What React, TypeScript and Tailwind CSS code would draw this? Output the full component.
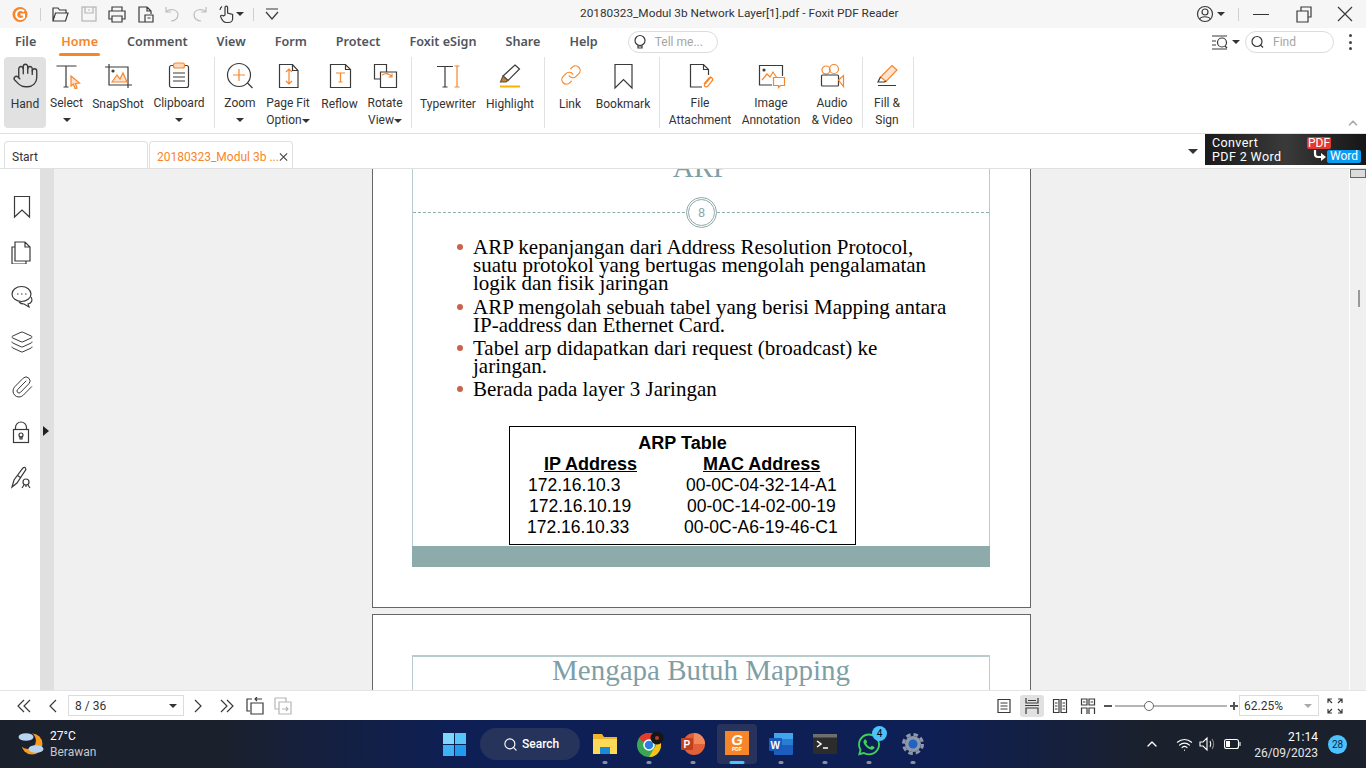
import type { ReactNode } from "react";
import { Hand, Link, Paperclip, Layers, Search, ChevronUp, Wifi } from "lucide-react";
import { FaWhatsapp } from "react-icons/fa";

const ORANGE = "#f7862a";
const DARK = "#3a3a3a";

const Ic = ({ s = 30, children }: { s?: number; children: ReactNode }) => (
  <svg width={s} height={s} viewBox={`0 0 ${s} ${s}`} fill="none" stroke={DARK} strokeWidth={1.2} className="shrink-0">
    {children}
  </svg>
);

const Caret = ({ className = "" }: { className?: string }) => (
  <span className={`inline-block h-0 w-0 border-x-[4px] border-t-[4px] border-x-transparent border-t-[#333] ${className}`} />
);

const Sep = () => <div className="h-[71px] w-px bg-[#e2e2e2]" />;

const RibbonItem = ({
  w,
  icon,
  label,
  second,
  active,
}: {
  w: string;
  icon: ReactNode;
  label: string;
  second?: ReactNode;
  active?: boolean;
}) => (
  <div className={`flex h-[71px] shrink-0 flex-col items-center rounded-[4px] pt-[3px] ${w} ${active ? "bg-[#e1e1e1]" : ""}`}>
    <div className="h-[31px]">{icon}</div>
    <div className="mt-[5px] whitespace-nowrap text-center text-[12px] leading-[17px] text-[#333]">{label}</div>
    {second && <div className="flex h-[17px] items-center whitespace-nowrap text-[12px] leading-[17px] text-[#333]">{second}</div>}
  </div>
);

const TitleBar = () => (
  <div className="flex h-[28px] items-center bg-[#f6f6f6]">
    <div className="flex w-[580px] shrink-0 items-center">
      <div className="ml-[12px] w-[28px]">
        <svg width="17" height="17" viewBox="0 0 17 17">
          <circle cx="8" cy="8.5" r="7.5" fill={ORANGE} />
          <path d="M12 5.5a4.5 4.5 0 1 0 0 6v-3H8.5" fill="none" stroke="#fff" strokeWidth="2" />
        </svg>
      </div>
      <div className="h-[13px] w-px bg-[#d0d0d0]" />
      <div className="ml-[9px] flex items-center">
        <Ic s={20}>
          <path d="M3 17V4h5l1.5 2H16v3M3 17l2.5-8H18l-2.5 8z" />
        </Ic>
        <div className="w-[9px]" />
        <Ic s={20}>
          <g stroke="#b5b5b5">
            <rect x="3" y="3" width="14" height="14" />
            <path d="M6 3v6h8V3M9 6h2" />
          </g>
        </Ic>
        <div className="w-[8px]" />
        <Ic s={20}>
          <path d="M5 7V3h10v4M5 15H2V7h16v8h-3M5 12h10v6H5z" />
        </Ic>
        <div className="w-[8px]" />
        <Ic s={20}>
          <path d="M12 3H4v15h6M12 3l4 4v3M12 3v4h4M10 11h8v7h-8zM12.5 14h3" />
        </Ic>
        <div className="w-[7px]" />
        <Ic s={20}>
          <path stroke="#bdbdbd" d="M4 3v5h5M4 8c3-4 12-3 12 3 0 4-4 6-7 6" />
        </Ic>
        <div className="w-[8px]" />
        <Ic s={20}>
          <path stroke="#bdbdbd" d="M16 3v5h-5M16 8c-3-4-12-3-12 3 0 4 4 6 7 6" />
        </Ic>
        <div className="w-[7px]" />
        <Ic s={20}>
          <path d="M8 11V3.5a1.3 1.3 0 0 1 2.6 0V9l5 1.5V15c0 2-2 3.5-4 3.5H9c-2 0-3.5-1.5-5-5l-.5-1.5c.5-1 2-1 3 0zM3 6a5 5 0 0 1 2-3.5" />
        </Ic>
        <Caret className="ml-[-1px]" />
        <div className="ml-[9px] h-[13px] w-px bg-[#d0d0d0]" />
        <div className="ml-[8px]">
          <Ic s={20}>
            <path d="M4 5h12M4 8l6 7 6-7" />
          </Ic>
        </div>
      </div>
    </div>
    <div className="w-[318px] shrink-0 whitespace-nowrap text-[11.8px] text-[#333]">20180323_Modul 3b Network Layer[1].pdf - Foxit PDF Reader</div>
    <div className="flex flex-1 items-center justify-end">
      <Ic s={18}>
        <circle cx="9" cy="9" r="7.5" />
        <circle cx="9" cy="7" r="3" />
        <path d="M3.8 14c1-3 9-3 10.400 0" />
      </Ic>
      <Caret className="ml-[3px]" />
      <div className="ml-[13px] h-[13px] w-px bg-[#d0d0d0]" />
      <div className="ml-[14px] h-px w-[16px] bg-[#333]" />
      <div className="ml-[26px]">
        <Ic s={18}>
          <path d="M2 6h11v11H2zM6 6V2h10v10h-3" />
        </Ic>
      </div>
      <div className="ml-[23px] mr-[12px]">
        <Ic s={18}>
          <path d="M2 2l14 14M16 2L2 16" />
        </Ic>
      </div>
    </div>
  </div>
);

const MenuBar = () => (
  <div className="flex h-[28px] items-center bg-white pl-[15px] pr-[14px]">
    <div className="flex items-center gap-[29px] font-['Noto_Sans',sans-serif] text-[12.6px] font-semibold text-[#50555d]">
      <span className="mr-[-4px]">File</span>
      <span className="relative text-[#f7862a]">
        Home
        <span className="absolute -bottom-[5px] -left-[2px] -right-[2px] h-[3px] rounded bg-[#f7862a]" />
      </span>
      <span>Comment</span>
      <span>View</span>
      <span>Form</span>
      <span>Protect</span>
      <span>Foxit eSign</span>
      <span>Share</span>
      <span>Help</span>
    </div>
    <div className="ml-[30px] flex h-[22px] w-[90px] items-center rounded-full border border-[#dcdcdc] pl-[3px] text-[12px] text-[#a5a5a5]">
      <Ic s={16}>
        <circle cx="8" cy="6.500" r="5" />
        <path d="M6 12h4v2H6z" />
      </Ic>
      <span className="ml-[7px]">Tell me...</span>
    </div>
    <div className="ml-auto flex items-center">
      <Ic s={18}>
        <path d="M1 3h15M1 8h4M1 12h4M1 16h15" />
        <circle cx="11" cy="9.500" r="4.500" />
        <path d="M14 13l2 2" />
      </Ic>
      <Caret className="ml-[3px]" />
      <div className="ml-[5px] flex h-[22px] w-[89px] items-center rounded-full border border-[#dcdcdc] pl-[3px] text-[12px] text-[#a5a5a5]">
        <Ic s={16}>
          <circle cx="8" cy="7.500" r="5" />
          <path d="M11.500 11l2.500 2.500" />
        </Ic>
        <span className="ml-[8px]">Find</span>
      </div>
      <div className="ml-[15px] flex w-[3px] flex-col gap-[3.500px]">
        <span className="h-[3px] w-[3px] rounded-full bg-[#444]" />
        <span className="h-[3px] w-[3px] rounded-full bg-[#444]" />
        <span className="h-[3px] w-[3px] rounded-full bg-[#444]" />
      </div>
    </div>
  </div>
);

const Ribbon = () => (
  <div className="relative flex h-[78px] items-start border-b border-[#e0e0e0] bg-white pl-[4px] pt-px">
    <RibbonItem
      w="w-[42px]"
      active
      label="Hand"
      icon={
        <div className="pt-[2px]">
          <Hand size={27} strokeWidth={1.2} color={DARK} />
        </div>
      }
    />
    <RibbonItem
      w="w-[41px]"
      label="Select"
      second={<Caret />}
      icon={
        <Ic>
          <path d="M4.500 6h20M14 6v21M11.500 27h5" />
          <path stroke={ORANGE} fill="#fde3cf" d="M19 16l8.500 7-4 .5 1.500 4.500-2 .5-1.500-4.500-2.500 2z" />
        </Ic>
      }
    />
    <RibbonItem
      w="w-[62px]"
      label="SnapShot"
      icon={
        <Ic>
          <path d="M2 7h23v21M6 4v21h23" />
          <path stroke={ORANGE} fill="#fde3cf" d="M9 22l5-7 3 4 3-6 4 9z" />
          <circle cx="10" cy="11" r="1" fill={DARK} />
        </Ic>
      }
    />
    <RibbonItem
      w="w-[60px]"
      label="Clipboard"
      second={<Caret />}
      icon={
        <Ic>
          <rect x="5.500" y="5.500" width="19" height="22" rx="2" />
          <rect x="9.500" y="3" width="11" height="5" rx="2" stroke={ORANGE} fill="#fdd9bf" />
          <path d="M9 13h12M9 17h12M9 21h12" />
        </Ic>
      }
    />
    <div className="w-[5px]" />
    <Sep />
    <RibbonItem
      w="w-[50px]"
      label="Zoom"
      second={<Caret />}
      icon={
        <Ic>
          <circle cx="14" cy="15" r="11.500" />
          <path d="M22.500 23l5 5" />
          <path stroke={ORANGE} d="M8 15h12M14 9v12" />
        </Ic>
      }
    />
    <RibbonItem
      w="w-[46px]"
      label="Page Fit"
      second={
        <>
          Option
          <Caret />
        </>
      }
      icon={
        <Ic>
          <path d="M6.500 4.500h13l5.500 6v17H6.500zM19.500 4.500v6H25" />
          <path stroke={ORANGE} d="M16 9v15M13 12l3-3 3 3M13 21l3 3 3-3" />
        </Ic>
      }
    />
    <RibbonItem
      w="w-[57px]"
      label="Reflow"
      icon={
        <Ic>
          <path d="M5.500 4.500h15l5 5v18h-20zM20.500 4.500v5h5" />
          <path stroke={ORANGE} d="M11 13h9M15.500 13v9M13.500 22h4" />
        </Ic>
      }
    />
    <RibbonItem
      w="w-[34px]"
      label="Rotate"
      second={
        <>
          View
          <Caret />
        </>
      }
      icon={
        <Ic>
          <path d="M10 19H4.500V4.500h12V12" />
          <path d="M10.500 12h16v15.500h-16z" />
          <path stroke={ORANGE} d="M12 15c3-2 7-2 10 2M22 13.500V17h-3.500" />
        </Ic>
      }
    />
    <div className="w-[9px]" />
    <Sep />
    <RibbonItem
      w="w-[72px]"
      label="Typewriter"
      icon={
        <Ic>
          <path d="M4 6.500h16M12 6.500v20.500M9.500 27h5" />
          <path stroke={ORANGE} d="M24 6v21M21.500 6h5M21.500 27h5" />
        </Ic>
      }
    />
    <RibbonItem
      w="w-[52px]"
      label="Highlight"
      icon={
        <Ic>
          <path d="M20 5l4.500 4-11.500 11.500-5-4.500z" />
          <path fill="#c9802e" stroke="#555" d="M8 16l-2.500 6h5.500l2-1.500z" />
          <path stroke="#f5b400" strokeWidth="2" d="M5 26.500h20" />
        </Ic>
      }
    />
    <div className="w-[8px]" />
    <Sep />
    <RibbonItem
      w="w-[50px]"
      label="Link"
      icon={
        <div className="pl-[1px] pt-[4px]">
          <Link size={22} strokeWidth={1.3} color={ORANGE} />
        </div>
      }
    />
    <RibbonItem
      w="w-[56px]"
      label="Bookmark"
      icon={
        <Ic>
          <path d="M7 4.500h17V28l-8.500-8.500L7 28z" />
        </Ic>
      }
    />
    <div className="w-[8px]" />
    <Sep />
    <RibbonItem
      w="w-[80px]"
      label="File"
      second="Attachment"
      icon={
        <Ic>
          <path d="M17 27H5.500V4.500h13l5 5V15M18.500 4.500v5h5" />
          <path stroke={ORANGE} d="M26 17l-6 7c-2 2 1 4 3 2l4-5c2-2-1-5-3-3l-5 6" />
        </Ic>
      }
    />
    <RibbonItem
      w="w-[62px]"
      label="Image"
      second="Annotation"
      icon={
        <Ic>
          <path d="M16 25H3.500V5.500h23V16" />
          <circle cx="8" cy="10" r="1" fill={DARK} />
          <path stroke={ORANGE} d="M6 20l5-6 3 3 3-5 4 6" />
          <path stroke={ORANGE} fill="#fff" d="M17.500 17.500h11v8h-4l-2 2v-2h-5z" />
        </Ic>
      }
    />
    <RibbonItem
      w="w-[60px]"
      label="Audio"
      second="& Video"
      icon={
        <Ic>
          <circle cx="9" cy="10" r="4" stroke={ORANGE} />
          <circle cx="17" cy="9" r="4.500" stroke={ORANGE} />
          <rect x="4.500" y="15" width="17" height="11" rx="1" />
          <path stroke={ORANGE} d="M21.500 20l5-4.500v11z" />
        </Ic>
      }
    />
    <Sep />
    <RibbonItem
      w="w-[48px]"
      label="Fill &"
      second="Sign"
      icon={
        <Ic>
          <path stroke={ORANGE} fill="#fde3cf" d="M20 5.500l5 4.500-11 11.500-5.500-4.500z" />
          <path d="M8.500 17l-2.500 5 6.500 0 1.500-1M6 25.500h18" />
        </Ic>
      }
    />
    <div className="w-[2px]" />
    <Sep />
    <div className="absolute bottom-[3px] right-[6px]">
      <ChevronUp size={14} strokeWidth={3} color="#aaa" />
    </div>
  </div>
);

const TabBar = () => (
  <div className="flex h-[35px] items-start border-b border-[#e0e0e0] bg-white pl-[4px]">
    <div className="mt-[7px] flex h-[27px] w-[144px] items-center rounded-t-[4px] border border-b-0 border-[#e0e0e0] pl-[7px] pt-[3px] text-[12px] text-[#333]">Start</div>
    <div className="ml-px mt-[7px] flex h-[27px] w-[144px] items-center justify-between rounded-t-[4px] border border-b-0 border-[#e0e0e0] pl-[7px] pr-[4px] pt-[3px] text-[12px] text-[#f7862a]">
      <span className="whitespace-nowrap">20180323_Modul 3b ...</span>
      <svg width="10" height="10" viewBox="0 0 10 10" stroke="#444" strokeWidth="1.2">
        <path d="M1 1l8 8M9 1l-8 8" />
      </svg>
    </div>
    <div className="ml-auto flex items-start">
      <Caret className="mr-[7px] mt-[15px] border-x-[5px] border-t-[5px]" />
      <div className="relative flex h-[31px] w-[161px] flex-col justify-center bg-gradient-to-r from-[#1a1a1a] via-[#3a3a3a] to-[#161616] pl-[7px] text-[12.5px] leading-[14px] tracking-[0.4px] text-white">
        <span>Convert</span>
        <span>PDF 2 Word</span>
        <span className="absolute left-[102px] top-[3px] rounded-[2px] bg-[#e23a2e] px-[1px] text-[12px] leading-[12px] tracking-normal">PDF</span>
        <span className="absolute left-[122px] top-[16px] rounded-[2px] bg-[#0a9cf0] px-[3px] text-[12px] leading-[13px] tracking-normal">Word</span>
        <svg className="absolute left-[108px] top-[16px]" width="13" height="12" viewBox="0 0 13 12" fill="none" stroke="#fff" strokeWidth="2.200">
          <path d="M2 0v4c0 2 1 3 3 3h4" />
          <path fill="#fff" stroke="none" d="M8 3l5 4-5 4z" />
        </svg>
      </div>
    </div>
  </div>
);

const SideRail = () => (
  <div className="flex w-[40px] shrink-0 flex-col items-center gap-[21px] bg-white pl-[3px] pt-[26px]">
    <Ic s={24}>
      <path d="M4.500 1.500h15v20.500L12 15l-7.500 7z" />
    </Ic>
    <Ic s={24}>
      <path d="M5 7H2v17h14v-3M5 21V2h10l5 5v14zM15 2v5h5" />
    </Ic>
    <Ic s={24}>
      <ellipse cx="11.500" cy="9" rx="9.500" ry="7.500" />
      <path d="M21 12c2 3 1 6-3 7l1 3-5-3c-2 0-4-1-5-2" />
      <path strokeDasharray="1.500 2.500" d="M7 9h10" />
    </Ic>
    <div className="h-[24px]">
      <Layers size={24} strokeWidth={1} color={DARK} />
    </div>
    <div className="h-[24px]">
      <Paperclip size={24} strokeWidth={1} color={DARK} />
    </div>
    <Ic s={24}>
      <rect x="3.500" y="9.500" width="15" height="13" />
      <path d="M5.500 9.500v-2a5.500 5.500 0 0 1 11 0v2" />
      <circle cx="11" cy="15" r="2" />
      <path d="M10 17h2v2h-2z" />
    </Ic>
    <Ic s={24}>
      <path d="M2 22l2-7L13 3c2-2 4 1 2 3L7 18zM7 10l4 3" />
      <circle cx="16" cy="17" r="3" />
      <path d="M14 20l-2 3M18 20l2 3M16 20v2" />
    </Ic>
  </div>
);

const Bullet = ({ lines }: { lines: string[] }) => (
  <div className="relative pl-[60px]">
    <span className="absolute left-[44px] top-[6px] h-[6px] w-[6px] rounded-full bg-[#c9634b]" />
    {lines.map((line) => (
      <div key={line} className="whitespace-nowrap">
        {line}
      </div>
    ))}
  </div>
);

const ArpRow = ({ ip, mac, ipPad, macPad }: { ip: string; mac: string; ipPad: string; macPad: string }) => (
  <div className="flex h-[21px] items-center whitespace-nowrap">
    <span className={`w-[170px] shrink-0 ${ipPad}`}>{ip}</span>
    <span className={macPad}>{mac}</span>
  </div>
);

const Viewer = () => (
  <div className="flex-1 overflow-hidden bg-[#f0f0f0] pl-[318px]">
    <div className="-mt-[60px] h-[499px] w-[659px] border border-[#666] bg-white pl-[39px] pr-[40px] pt-[40px]">
      <div className="h-[396px] border-x border-[#b7cccb]">
        <div className="h-[34px] text-center font-['Liberation_Serif',serif] text-[29px] leading-[34px] text-[#7f9fa6]">ARP</div>
        <div className="relative mt-[28px] h-px border-t border-dashed border-[#8fb0ae]">
          <div className="absolute left-[273px] top-[-16px] flex h-[31px] w-[31px] items-center justify-center rounded-full border-[3px] border-double border-[#8fa8a8] bg-white font-['Liberation_Sans',sans-serif] text-[12px] text-[#7f9fa6]">8</div>
        </div>
        <div className="mt-[25px] flex flex-col gap-[5px] font-['Liberation_Serif',serif] text-[21px] leading-[18.200px] text-black">
          <Bullet lines={["ARP kepanjangan dari Address Resolution Protocol,", "suatu protokol yang bertugas mengolah pengalamatan", "logik dan fisik jaringan"]} />
          <Bullet lines={["ARP mengolah sebuah tabel yang berisi Mapping antara", "IP-address dan Ethernet Card."]} />
          <Bullet lines={["Tabel arp didapatkan dari request (broadcast) ke", "jaringan."]} />
          <Bullet lines={["Berada pada layer 3 Jaringan"]} />
        </div>
        <div className="ml-[96px] mt-[27px] h-[119px] w-[347px] border border-black pt-[6px] font-['Liberation_Sans',sans-serif] text-[17.5px] text-black">
          <div className="h-[21px] text-center text-[18px] font-bold leading-[21px]">ARP Table</div>
          <div className="flex h-[21px] items-center text-[18px] font-bold underline">
            <span className="w-[127px] shrink-0 text-right">IP Address</span>
            <span className="ml-[66px]">MAC Address</span>
          </div>
          <ArpRow ip="172.16.10.3" mac="00-0C-04-32-14-A1" ipPad="pl-[18px]" macPad="pl-[6px]" />
          <ArpRow ip="172.16.10.19" mac="00-0C-14-02-00-19" ipPad="pl-[19px]" macPad="pl-[7px]" />
          <ArpRow ip="172.16.10.33" mac="00-0C-A6-19-46-C1" ipPad="pl-[17px]" macPad="pl-[4px]" />
        </div>
      </div>
      <div className="h-[21px] bg-[#8eabac]" />
    </div>
    <div className="mt-[6px] h-[200px] w-[659px] border border-[#666] bg-white pl-[39px] pr-[40px] pt-[40px]">
      <div className="h-[100px] border-x border-t-2 border-[#b7cccb]">
        <div className="text-center font-['Liberation_Serif',serif] text-[29px] leading-[26px] text-[#7f9fa6]">Mengapa Butuh Mapping</div>
      </div>
    </div>
  </div>
);

const BottomBar = () => (
  <div className="flex h-[30px] items-center border-t border-[#e4e4e4] bg-white">
    <div className="flex items-center pl-[16px]">
      <Ic s={16}>
        <path d="M8 2L2 8l6 6M14 2L8 8l6 6" />
      </Ic>
      <div className="ml-[13px]">
        <Ic s={16}>
          <path d="M11 2L5 8l6 6" />
        </Ic>
      </div>
      <div className="ml-[7px] flex h-[21px] w-[116px] items-center justify-between border border-[#dcdcdc] pl-[6px] pr-[6px] text-[12px] text-[#333]">
        8 / 36
        <Caret />
      </div>
      <div className="ml-[6px]">
        <Ic s={16}>
          <path d="M5 2l6 6-6 6" />
        </Ic>
      </div>
      <div className="ml-[13px]">
        <Ic s={16}>
          <path d="M2 2l6 6-6 6M8 2l6 6-6 6" />
        </Ic>
      </div>
      <div className="ml-[11px]">
        <Ic s={18}>
          <path d="M6 2H1v12h3M5 6h12v11H5zM16 2h-7M11 0L9 2l2 2" />
        </Ic>
      </div>
      <div className="ml-[10px]">
        <Ic s={18}>
          <g stroke="#b5b5b5">
            <path d="M1 1h11v4M1 1v11h4M5 5h12v12H5zM8 12h6M12 10l2 2-2 2" />
          </g>
        </Ic>
      </div>
    </div>
    <div className="ml-auto flex items-center pr-[23px]">
      <Ic s={16}>
        <path d="M2 1.500h12v13H2zM4.500 5h7M4.500 8h7M4.500 11h7" />
      </Ic>
      <div className="ml-[8px] flex h-[22px] w-[24px] items-center justify-center rounded-[3px] bg-[#e1e1e1]">
        <Ic s={16}>
          <path d="M2 0v5h12V0M4 2.500h8M2 16v-6h12v6M1 7.500h14" />
        </Ic>
      </div>
      <div className="ml-[8px]">
        <Ic s={16}>
          <path d="M1.500 1.500h5.500v13H1.500zM9 1.500h5.500v13H9zM3 5h2.500M3 8h2.500M3 11h2.500M10.500 5H13M10.500 8H13M10.500 11H13" />
        </Ic>
      </div>
      <div className="ml-[12px]">
        <Ic s={16}>
          <path d="M1.500 1h5.500v6H1.500zM9 1h5.500v6H9zM1.500 16v-6H7v6M9 16v-6h5.500v6M3 4h2.500M10.500 4H13" />
        </Ic>
      </div>
      <div className="ml-[8px] h-[2px] w-[8px] bg-[#555]" />
      <div className="relative ml-[3px] h-[2px] w-[112px] bg-[#b5b5b5]">
        <span className="absolute left-[29px] top-[-4px] h-[10px] w-[10px] rounded-full border border-[#666] bg-white" />
      </div>
      <div className="relative ml-[3px] h-[8px] w-[8px]">
        <span className="absolute left-0 top-[3px] h-[2px] w-[8px] bg-[#555]" />
        <span className="absolute left-[3px] top-0 h-[8px] w-[2px] bg-[#555]" />
      </div>
      <div className="ml-[1px] flex h-[21px] w-[80px] items-center justify-between border border-[#dcdcdc] pl-[4px] pr-[6px] text-[12px] text-[#333]">
        62.25%
        <Caret className="border-t-[#aaa]" />
      </div>
      <div className="ml-[8px]">
        <Ic s={16}>
          <path d="M5 1H1v4M11 1h4v4M5 15H1v-4M11 15h4v-4M1 1l4 4M15 1l-4 4M1 15l4-4M15 15l-4-4" />
        </Ic>
      </div>
    </div>
  </div>
);

const Dot = ({ active }: { active?: boolean }) => (
  <span className={`absolute bottom-[-5px] left-1/2 h-[3px] -translate-x-1/2 rounded-full ${active ? "w-[15px] bg-[#4cc2ff]" : "w-[5px] bg-[#8a8f9c]"}`} />
);

const TaskIcon = ({ children, active }: { children: ReactNode; active?: boolean }) => (
  <div className={`relative flex h-[40px] w-[40px] items-center justify-center rounded-[4px] ${active ? "bg-[#27335a]" : ""}`}>
    {children}
    <div className="absolute bottom-[5px] left-1/2 -translate-x-1/2">
      <div className="relative">
        <Dot active={active} />
      </div>
    </div>
  </div>
);

const Taskbar = () => (
  <div className="flex h-[48px] items-center bg-[linear-gradient(90deg,#1a202c_0%,#1a202c_16%,#0e1f55_33%,#0e1f55_68%,#1a202c_84%,#1a202c_100%)]">
    <div className="flex w-[443px] shrink-0 items-center pl-[17px]">
      <svg width="28" height="26" viewBox="0 0 28 26">
        <circle cx="15" cy="13" r="10.500" fill="#f59a23" />
        <circle cx="10.500" cy="9.500" r="8.500" fill="#1a202c" />
        <ellipse cx="9" cy="6" rx="7.500" ry="3.800" fill="#b9d3f2" />
        <ellipse cx="19" cy="18" rx="7.500" ry="3.800" fill="#b9d3f2" />
      </svg>
      <div className="ml-[5px] text-[12px] leading-[16px]">
        <div className="text-white">27°C</div>
        <div className="text-[#c5c8cf]">Berawan</div>
      </div>
    </div>
    <div className="grid h-[23px] w-[23px] shrink-0 grid-cols-2 gap-px">
      <span className="bg-[#7fd6fb]" />
      <span className="bg-[#55c6f9]" />
      <span className="bg-[#3cb3f5]" />
      <span className="bg-[#1f9cf0]" />
    </div>
    <div className="ml-[14px] flex h-[32px] w-[100px] shrink-0 items-center rounded-full bg-[#26345c] pl-[23px] text-[12px] font-medium text-white">
      <Search size={15} color="#fff" strokeWidth={1.8} />
      <span className="ml-[4px]">Search</span>
    </div>
    <div className="ml-[5px] flex items-center gap-[4px]">
      <TaskIcon>
        <svg width="24" height="22" viewBox="0 0 24 22">
          <path d="M0 1h9l2 3h13v17H0z" fill="#f0b429" />
          <path d="M0 6h24v15H0z" fill="#fcd957" />
          <path d="M7 14h10v7H7z" fill="#1c89d6" />
        </svg>
      </TaskIcon>
      <TaskIcon>
        <svg width="26" height="26" viewBox="-1 0 26 26" className="overflow-visible">
          <circle cx="12" cy="14" r="12" fill="#3aa757" />
          <path d="M12 2a12 12 0 0 1 10.400 6H12a6 6 0 0 0-5.500 3.500L2 7a12 12 0 0 1 10-5z" fill="#e33b2e" />
          <path d="M22.400 8A12 12 0 0 1 12 26l5-8.500A6 6 0 0 0 17 8z" fill="#fbc116" />
          <circle cx="12" cy="14" r="5" fill="#2a7de1" stroke="#fff" strokeWidth="1.500" />
          <circle cx="20" cy="7" r="6.500" fill="#161616" />
          <circle cx="20" cy="7" r="2" fill="#b53a3a" />
        </svg>
      </TaskIcon>
      <TaskIcon>
        <svg width="26" height="24" viewBox="0 0 26 24">
          <circle cx="14" cy="12" r="11" fill="#e0603a" />
          <path d="M14 1a11 11 0 0 1 11 11H14z" fill="#f08a5d" />
          <rect x="1" y="6" width="12" height="12" rx="1" fill="#c43e1c" />
          <text x="3.500" y="16" fontSize="10" fontWeight="700" fill="#fff" fontFamily="Liberation Sans, sans-serif">P</text>
        </svg>
      </TaskIcon>
      <TaskIcon active>
        <div className="relative mt-[-3px] h-[24px] w-[24px] bg-[#f7862a] pt-[1px] text-center font-['Liberation_Sans',sans-serif] leading-none text-white">
          <div className="text-[15px] font-bold italic">G</div>
          <div className="text-[5px] font-bold">PDF</div>
        </div>
      </TaskIcon>
      <TaskIcon>
        <svg width="26" height="24" viewBox="0 0 26 24">
          <rect x="6" y="1" width="19" height="22" rx="1" fill="#1b5ebe" />
          <rect x="6" y="1" width="19" height="6" fill="#41a5ee" />
          <rect x="6" y="7" width="19" height="6" fill="#2b7cd3" />
          <rect x="1" y="6" width="13" height="13" rx="1" fill="#185abd" />
          <text x="2.500" y="16.500" fontSize="10" fontWeight="700" fill="#fff" fontFamily="Liberation Sans, sans-serif">W</text>
        </svg>
      </TaskIcon>
      <TaskIcon>
        <svg width="24" height="20" viewBox="0 0 24 20">
          <rect width="24" height="20" rx="1" fill="#2c2c2c" />
          <rect width="24" height="3.500" fill="#6e6e6e" />
          <path d="M4 7l4 3-4 3" stroke="#fff" strokeWidth="1.500" fill="none" />
          <path d="M10 14h5" stroke="#fff" strokeWidth="1.500" />
        </svg>
      </TaskIcon>
      <TaskIcon>
        <div className="relative">
          <div className="flex h-[24px] w-[24px] items-center justify-center">
            <FaWhatsapp size={25} color="#3fd15a" />
          </div>
          <span className="absolute -right-[6px] -top-[6px] flex h-[15px] w-[15px] items-center justify-center rounded-full bg-[#4cc2ff] text-[10px] text-black">4</span>
        </div>
      </TaskIcon>
      <TaskIcon>
        <svg width="24" height="24" viewBox="0 0 24 24">
          <circle cx="12" cy="12" r="9.500" fill="none" stroke="#8e98a8" strokeWidth="3" strokeDasharray="4.500 3" />
          <circle cx="12" cy="12" r="8" fill="#8e98a8" />
          <circle cx="12" cy="12" r="4.500" fill="#1f63c7" />
        </svg>
      </TaskIcon>
    </div>
    <div className="ml-auto flex items-center pr-[19px] text-white">
      <ChevronUp size={16} color="#fff" strokeWidth={2} />
      <div className="ml-[16px]">
        <Wifi size={17} color="#fff" strokeWidth={1.6} />
      </div>
      <svg className="ml-[6px]" width="18" height="16" viewBox="0 0 18 16" fill="none" stroke="#fff" strokeWidth="1.100">
        <path d="M1 6h3l4-4v12l-4-4H1zM11 5c1 2 1 4 0 6" />
        <path stroke="#888" d="M13 3c2 3 2 7 0 10" />
      </svg>
      <svg className="ml-[7px]" width="17" height="12" viewBox="0 0 17 12" fill="none" stroke="#fff" strokeWidth="1.100">
        <rect x=".500" y="1.500" width="14" height="9" rx="2" />
        <rect x="2" y="3" width="4" height="6" fill="#fff" stroke="none" />
        <path d="M16 4v4" />
      </svg>
      <div className="ml-[13px] pt-px text-right text-[12px] leading-[16px]">
        <div>21:14</div>
        <div className="text-[#e6e6e6]">26/09/2023</div>
      </div>
      <span className="ml-[10px] flex h-[19px] w-[19px] items-center justify-center rounded-full bg-[#4cc2ff] text-[10px] text-[#10203c]">28</span>
    </div>
  </div>
);

export default function App() {
  return (
    <div className="h-[768px] w-[1366px] overflow-hidden bg-white font-['Roboto',sans-serif]">
      <TitleBar />
      <MenuBar />
      <Ribbon />
      <TabBar />
      <div className="flex h-[521px] overflow-hidden">
        <SideRail />
        <div className="relative w-[14px] shrink-0 bg-[#e0e0e0]">
          <span className="absolute left-[3px] top-[257px] h-0 w-0 border-y-[5px] border-l-[6px] border-y-transparent border-l-[#222]" />
        </div>
        <Viewer />
        <div className="relative w-[17px] shrink-0 border-l border-white bg-[#f0f0f0]">
          <div className="h-[9px] w-full border border-[#666] bg-[#dcdcdc]" />
          <div className="absolute left-[8px] top-[121px] h-[17px] w-[2px] bg-[#999]" />
        </div>
      </div>
      <BottomBar />
      <Taskbar />
    </div>
  );
}
